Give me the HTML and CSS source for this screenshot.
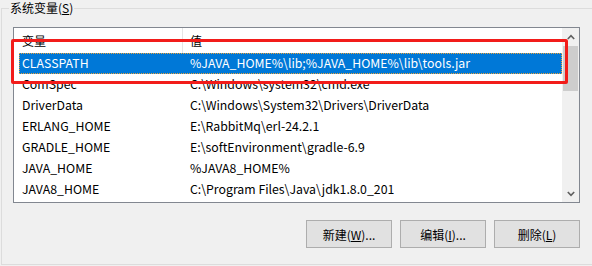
FILE: index.html
```html
<!DOCTYPE html>
<html lang="zh-CN">
<head>
<meta charset="utf-8">
<title>系统变量</title>
<link rel="stylesheet" href="styles.css">
</head>
<body>
<div class="group">
  <span class="legend">系统变量(<u>S</u>)</span>
  <div class="panel">
    <div class="listbox">
      <div class="table">
        <div class="thead">
          <div class="h1">变量</div>
          <div class="h2">值</div>
        </div>
        <div class="row sel"><div class="c1">CLASSPATH</div><div class="c2">%JAVA_HOME%\lib;%JAVA_HOME%\lib\tools.jar</div></div>
        <div class="row"><div class="c1">ComSpec</div><div class="c2">C:\Windows\system32\cmd.exe</div></div>
        <div class="row"><div class="c1">DriverData</div><div class="c2">C:\Windows\System32\Drivers\DriverData</div></div>
        <div class="row"><div class="c1">ERLANG_HOME</div><div class="c2">E:\RabbitMq\erl-24.2.1</div></div>
        <div class="row"><div class="c1">GRADLE_HOME</div><div class="c2">E:\softEnvironment\gradle-6.9</div></div>
        <div class="row"><div class="c1">JAVA_HOME</div><div class="c2">%JAVA8_HOME%</div></div>
        <div class="row"><div class="c1">JAVA8_HOME</div><div class="c2">C:\Program Files\Java\jdk1.8.0_201</div></div>
      </div>
      <div class="scrollbar">
        <div class="sb-btn"><svg width="8" height="6" viewBox="0 0 8 6"><polyline points="0.8,5 4,1.6 7.2,5" fill="none" stroke="#606060" stroke-width="1.6"/></svg></div>
        <div class="track"><div class="thumb"></div></div>
        <div class="sb-btn"><svg width="8" height="6" viewBox="0 0 8 6"><polyline points="0.8,1 4,4.4 7.2,1" fill="none" stroke="#606060" stroke-width="1.6"/></svg></div>
      </div>
    </div>
    <div class="buttons">
      <button class="btn">新建(<u>W</u>)...</button>
      <button class="btn">编辑(<u>I</u>)...</button>
      <button class="btn">删除(<u>L</u>)</button>
    </div>
  </div>
</div>
<div class="annot"></div>
</body>
</html>
```
FILE: styles.css
```css
html, body {
  margin: 0;
  padding: 0;
  background: #f0f0f0;
  width: 592px;
  height: 266px;
  overflow: hidden;
}
body {
  position: relative;
  font-family: "Noto Sans CJK SC", "Noto Sans", sans-serif;
  font-size: 12px;
  color: #000;
}
.group {
  position: relative;
  margin: 8px 0 0 1px;
  height: 255px;
  border: 1px solid #dcdcdc;
  border-right: none;
}
.legend {
  position: absolute;
  top: -10px;
  left: 7px;
  padding: 0 1px;
  background: #f0f0f0;
  line-height: 17px;
  color: #000;
}
.legend u { text-decoration-thickness: 1px; text-underline-offset: 1px; }
.panel {
  display: flex;
  flex-direction: column;
  width: 567px;
  margin: 18px 0 0 11px;
}
.listbox {
  display: flex;
  height: 174px;
  border: 1px solid #828790;
  background: #fff;
}
.table {
  flex: 1;
  display: flex;
  flex-direction: column;
}
.thead {
  display: flex;
  height: 25px;
  align-items: center;
  line-height: 25px;
}
.h1 {
  width: 160px;
  padding-left: 8px;
  border-right: 1px solid #e5e5e5;
  height: 25px;
}
.h2 {
  padding-left: 7px;
}
.row {
  display: flex;
  height: 21px;
  line-height: 21px;
  margin-left: 5px;
  white-space: nowrap;
  font-size: 12.3px;
}
.c1 {
  width: 168px;
  padding-left: 3px;
}
.c2 { flex: 1; }
.row.sel {
  background: #0078d7;
  color: #fff;
  outline: 1px dotted #e9a23b;
  outline-offset: -1px;
}
.scrollbar {
  width: 17px;
  display: flex;
  flex-direction: column;
  background: #f0f0f0;
}
.sb-btn {
  height: 17px;
  display: flex;
  align-items: center;
  justify-content: center;
}
.track {
  flex: 1;
  padding-top: 1px;
}
.thumb {
  height: 45px;
  margin: 0 1px;
  background: #cdcdcd;
}
.buttons {
  display: flex;
  justify-content: flex-end;
  gap: 8px;
  margin-top: 17px;
}
.btn {
  width: 86px;
  height: 28px;
  margin: 0;
  padding: 0;
  background: #e1e1e1;
  border: 1px solid #adadad;
  border-radius: 0;
  font-family: "Noto Sans CJK SC", "Noto Sans", sans-serif;
  font-size: 12px;
  color: #000;
}
.btn u { text-underline-offset: 1px; }
.annot {
  position: absolute;
  left: 11px;
  top: 39px;
  width: 551px;
  height: 39px;
  border: 3px solid #f21c1a;
  border-radius: 2px;
}
```
